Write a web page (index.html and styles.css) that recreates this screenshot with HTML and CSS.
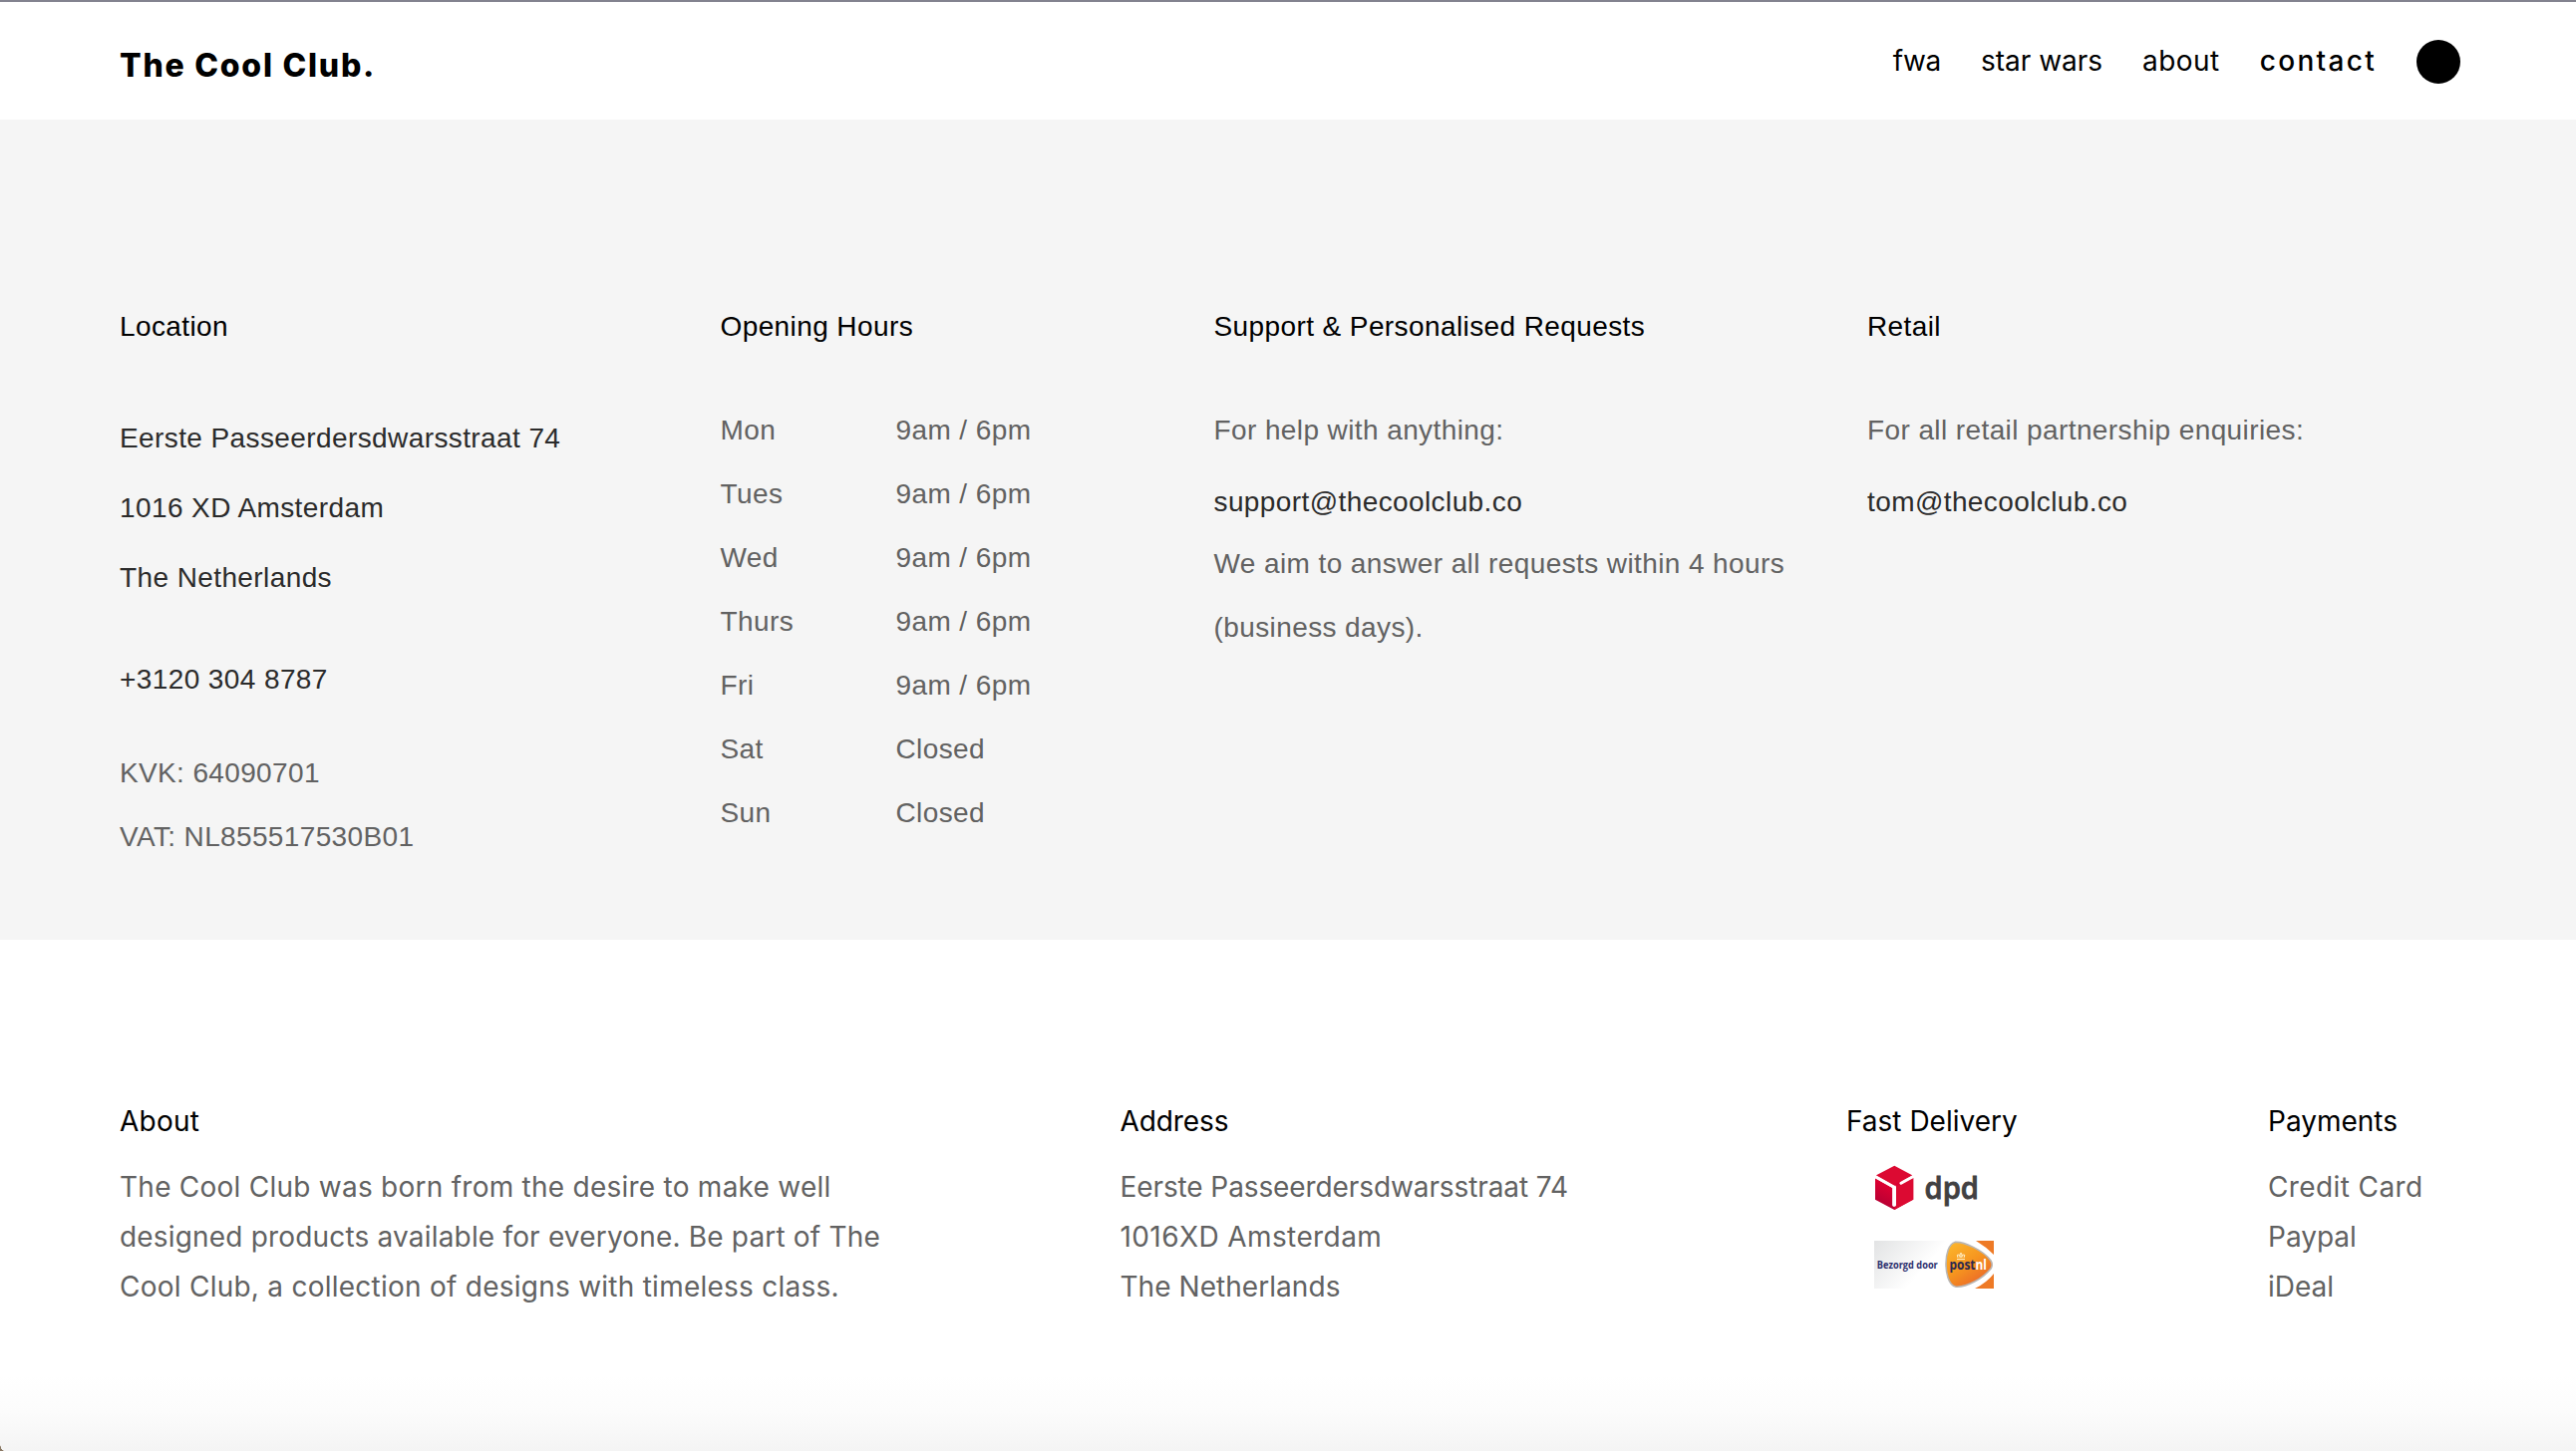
FILE: index.html
```html
<!DOCTYPE html>
<html lang="en">
<head>
<meta charset="utf-8">
<title>The Cool Club. – Contact</title>
<link rel="stylesheet" href="styles.css">
</head>
<body>
<header class="site-header">
  <a class="brand">The Cool Club.</a>
  <nav class="nav">
    <a class="nav-short">fwa</a>
    <a>star wars</a>
    <a class="nav-about">about</a>
    <a class="active">contact</a>
    <span class="cart-dot"></span>
  </nav>
</header>

<main class="contact">
  <section>
    <h2>Location</h2>
    <address class="strong-lines">
      <div>Eerste Passeerdersdwarsstraat 74</div>
      <div>1016 XD Amsterdam</div>
      <div>The Netherlands</div>
      <div class="phone">+3120 304 8787</div>
    </address>
    <div class="registration">
      <div>KVK: 64090701</div>
      <div>VAT: NL855517530B01</div>
    </div>
  </section>
  <section>
    <h2>Opening Hours</h2>
    <dl class="hours">
      <dt>Mon</dt><dd>9am / 6pm</dd>
      <dt>Tues</dt><dd>9am / 6pm</dd>
      <dt>Wed</dt><dd>9am / 6pm</dd>
      <dt>Thurs</dt><dd>9am / 6pm</dd>
      <dt>Fri</dt><dd>9am / 6pm</dd>
      <dt>Sat</dt><dd>Closed</dd>
      <dt>Sun</dt><dd>Closed</dd>
    </dl>
  </section>
  <section>
    <h2>Support &amp; Personalised Requests</h2>
    <p>For help with anything:</p>
    <a class="email">support@thecoolclub.co</a>
    <p>We aim to answer all requests within 4 hours<br>(business days).</p>
  </section>
  <section>
    <h2>Retail</h2>
    <p>For all retail partnership enquiries:</p>
    <a class="email">tom@thecoolclub.co</a>
  </section>
</main>

<footer class="site-footer">
  <section class="about">
    <h3>About</h3>
    <p>The Cool Club was born from the desire to make well<br><span class="tight">designed products available for everyone. Be part of The</span><br>Cool Club, a collection of designs with timeless class.</p>
  </section>
  <section class="postal">
    <h3>Address</h3>
    <p>Eerste Passeerdersdwarsstraat 74<br><span class="postcode">1016XD Amsterdam</span><br><span class="country">The Netherlands</span></p>
  </section>
  <section>
    <h3>Fast Delivery</h3>
    <div class="carriers">
      <svg class="carrier" viewBox="0 0 120 48" role="img" aria-label="dpd">
        <defs>
          <linearGradient id="box" x1="0" y1="1" x2=".6" y2="0"><stop offset="0" stop-color="#a90034"/><stop offset=".7" stop-color="#dc0032"/></linearGradient>
        </defs>
        <path fill="#dc0a32" d="M20.3 1.8 38.6 11.6 26.3 18.2 20.3 22 1.6 11.6Z"/>
        <path fill="url(#box)" d="M1 14.2 18.2 24V41.3Q18.4 42.8 20.1 42.8Q21.8 42.8 22 41.3V23L20.3 19.8 38.6 14V35.8L20.3 46 1 35.8Z"/>
        <path fill="#dc0a32" d="M22 22 39.4 14V35.8L20.3 46V42.8H22Z"/>
        <path fill="none" stroke="#fff" stroke-width="3" stroke-linecap="round" stroke-linejoin="round" d="M.6 12.4 20.1 23.3V41M27 19.3 39.6 12.2"/>
        <text class="dpd-name" x="50.5" y="34.5" textLength="54.5" lengthAdjust="spacingAndGlyphs">dpd</text>
      </svg>
      <svg class="carrier" viewBox="0 0 120 48" role="img" aria-label="Bezorgd door postnl">
        <defs>
          <linearGradient id="sheen" x1="0" y1="0" x2="1" y2=".35"><stop offset="0" stop-color="#e2e3e4"/><stop offset=".55" stop-color="#fff"/></linearGradient>
          <linearGradient id="badge" x1=".1" y1="0" x2=".8" y2="1"><stop offset="0" stop-color="#fcb62c"/><stop offset=".5" stop-color="#f6951f"/><stop offset="1" stop-color="#e9602a"/></linearGradient>
        </defs>
        <path fill="url(#sheen)" d="M0 0H120V48H0Z"/>
        <path fill="#ee7a26" d="M102 0H120V14Q112 6 102 0ZM101 48Q113 42 120 33V48Z"/>
        <path fill="url(#badge)" stroke="#b9b6b4" stroke-width="1.6" d="M81 1.4C90 .6 110 10 117 20Q119.4 24 117 28C109 38 93 46.8 82 46.2C74 44.6 72 31 72 23C72 13 75 3 81 1.4Z"/>
        <path fill="none" stroke="#fff3cf" stroke-width="1" d="M83 18.6H91M84 17 83.3 14.3 85.5 14 86.2 17M90 17 90.8 14.3 88.5 14 87.8 17M87 17V12M85.9 13H88.1"/>
        <text class="post-lead" x="2.8" y="28.2" textLength="61" lengthAdjust="spacingAndGlyphs">Bezorgd door</text>
        <text class="post-name" x="75.5" y="28.8" textLength="37.5" lengthAdjust="spacingAndGlyphs">post<tspan fill="#fff">nl</tspan></text>
      </svg>
    </div>
  </section>
  <section>
    <h3>Payments</h3>
    <p><span class="postcode">Credit Card</span><br>Paypal<br>iDeal</p>
  </section>
</footer>
<i class="window-corner"></i>
</body>
</html>
```
FILE: styles.css
```css
* { box-sizing: border-box; }

body {
  margin: 0;
  height: 1456px;
  display: flex;
  flex-direction: column;
  position: relative;
  overflow: hidden;
  background: #fff;
  color: #000;
}

h2, h3, p, dl, dd { margin: 0; font-weight: 400; font-size: inherit; }

/* Header */
.site-header {
  flex: none;
  height: 120px;
  padding: 0 116px 0 120px;
  display: flex;
  justify-content: space-between;
  align-items: flex-start;
  border-top: 2px solid #83838f;
  font: 28px/50px Inter, sans-serif;
}
.brand { margin-top: 39px; font-size: 32px; font-weight: 800; letter-spacing: 1.75px; }
.nav { display: flex; gap: 40px; margin-top: 34px; }
.nav-short { letter-spacing: -.4px; }
.nav-about { letter-spacing: .45px; }
.active { font-weight: 500; letter-spacing: 2.3px; }
.cart-dot { width: 44px; height: 44px; margin-top: 4px; border-radius: 50%; background: #000; }

/* Contact details */
.contact {
  flex: none;
  height: 823px;
  padding: 176px 0 0 120px;
  display: grid;
  grid-template-columns: 602.5px 495px 655.5px 1fr;
  background: #f5f5f5;
  color: #626262;
  font: 28px/64px "Liberation Sans", Arial, sans-serif;
  letter-spacing: .4px;
}
.contact h2 { margin-bottom: 40px; color: #000; }
.strong-lines { padding-top: 5px; line-height: 70px; font-style: normal; color: #2b2b2b; }
.phone { margin-top: 32px; }
.registration { margin-top: 27px; letter-spacing: .36px; }
.hours { display: grid; grid-template-columns: 176px 1fr; }
.email { display: block; padding-top: 10px; line-height: 60px; color: #2b2b2b; }

/* Footer */
.site-footer {
  flex: 1;
  padding: 157px 0 0 120px;
  display: grid;
  grid-template-columns: 1003.5px 728.5px 423px 1fr;
  background: linear-gradient(to top, #f4f4f4, #fcfcfc 40px, #fff 76px);
  color: #626262;
  font: 28px/50px Inter, sans-serif;
}
.site-footer h3 { margin-bottom: 16px; color: #000; }
.about { letter-spacing: .25px; }
.tight { letter-spacing: .18px; }
.postal { letter-spacing: -.1px; }
.country { letter-spacing: .05px; }
.postcode { letter-spacing: .4px; }
.carriers { display: flex; flex-direction: column; gap: 29px; padding: 2px 0 0 28px; }
.carrier { display: block; width: 120px; height: 48px; }
.dpd-name { font: 600 30px "Open Sans", sans-serif; fill: #414042; stroke: #414042; stroke-width: .8px; }
.post-lead { font: 700 10.5px "Open Sans", sans-serif; fill: #2c2f6e; }
.post-name { font: 700 13.5px "Open Sans", sans-serif; fill: #2c2850; }

/* Rounded window edge in the bottom-left corner */
.window-corner {
  position: absolute;
  left: 0;
  bottom: 0;
  width: 4px;
  height: 8px;
  background: radial-gradient(ellipse 4px 8px at 100% 0, transparent 92%, #8b7965 100%);
}
```
